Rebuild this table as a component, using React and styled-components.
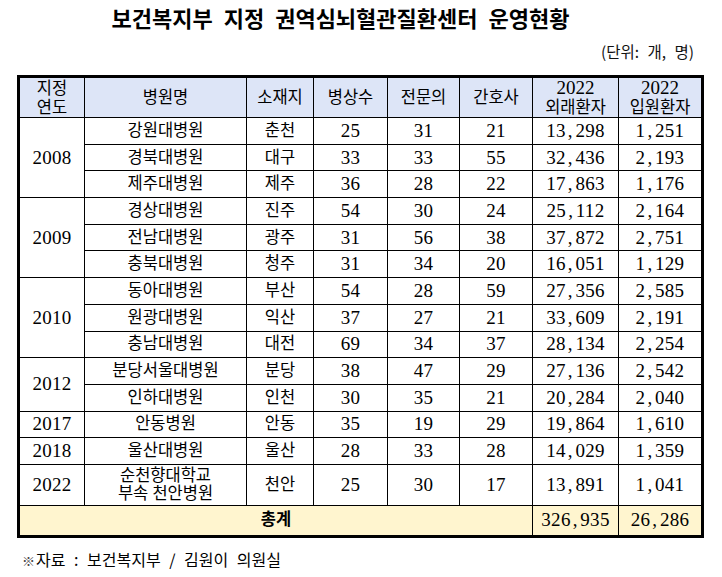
import styled, { createGlobalStyle } from "styled-components";

const GlobalStyle = createGlobalStyle`
  body {
    margin: 0;
    background: #fff;
    color: #000;
    font-family: "Noto Sans CJK KR", sans-serif;
  }
`;

const groups = [
  {
    year: "2008",
    rows: [
      ["강원대병원", "춘천", "25", "31", "21", "13,298", "1,251"],
      ["경북대병원", "대구", "33", "33", "55", "32,436", "2,193"],
      ["제주대병원", "제주", "36", "28", "22", "17,863", "1,176"],
    ],
  },
  {
    year: "2009",
    rows: [
      ["경상대병원", "진주", "54", "30", "24", "25,112", "2,164"],
      ["전남대병원", "광주", "31", "56", "38", "37,872", "2,751"],
      ["충북대병원", "청주", "31", "34", "20", "16,051", "1,129"],
    ],
  },
  {
    year: "2010",
    rows: [
      ["동아대병원", "부산", "54", "28", "59", "27,356", "2,585"],
      ["원광대병원", "익산", "37", "27", "21", "33,609", "2,191"],
      ["충남대병원", "대전", "69", "34", "37", "28,134", "2,254"],
    ],
  },
  {
    year: "2012",
    rows: [
      ["분당서울대병원", "분당", "38", "47", "29", "27,136", "2,542"],
      ["인하대병원", "인천", "30", "35", "21", "20,284", "2,040"],
    ],
  },
  {
    year: "2017",
    rows: [["안동병원", "안동", "35", "19", "29", "19,864", "1,610"]],
  },
  {
    year: "2018",
    rows: [["울산대병원", "울산", "28", "33", "28", "14,029", "1,359"]],
  },
  {
    year: "2022",
    tall: true,
    rows: [
      [["순천향대학교", "부속 천안병원"], "천안", "25", "30", "17", "13,891", "1,041"],
    ],
  },
];

const colWidths = [66, 162, 67, 74, 72, 73, 86, 84];

// 천 단위 쉼표가 원본에서 넓게 잡혀 있어 따로 간격을 준다
const withCommas = (s) =>
  s.split(",").map((part, i) => (
    <span key={i}>
      {i > 0 && <Comma>,</Comma>}
      {part}
    </span>
  ));

const App = () => {
  return (
    <Page>
      <GlobalStyle />
      <Title>보건복지부 지정 권역심뇌혈관질환센터 운영현황</Title>
      <Unit>(단위: 개, 명)</Unit>
      <Table>
        <colgroup>
          {colWidths.map((w, i) => (
            <col key={i} style={{ width: w }} />
          ))}
        </colgroup>
        <thead>
          <HeadRow>
            <HeadCell>
              지정
              <br />
              연도
            </HeadCell>
            <HeadCell>병원명</HeadCell>
            <HeadCell>소재지</HeadCell>
            <HeadCell>병상수</HeadCell>
            <HeadCell>전문의</HeadCell>
            <HeadCell>간호사</HeadCell>
            <HeadCell>
              <Digits>2022</Digits>
              <br />
              외래환자
            </HeadCell>
            <HeadCell>
              <Digits>2022</Digits>
              <br />
              입원환자
            </HeadCell>
          </HeadRow>
        </thead>
        <tbody>
          {groups.map((g) =>
            g.rows.map((r, i) => (
              <Row key={g.year + i} $tall={g.tall}>
                {i === 0 && <NumCell rowSpan={g.rows.length}>{g.year}</NumCell>}
                <TextCell $tight={Array.isArray(r[0])}>
                  {Array.isArray(r[0]) ? (
                    <>
                      {r[0][0]}
                      <br />
                      {r[0][1]}
                    </>
                  ) : (
                    r[0]
                  )}
                </TextCell>
                <TextCell>{r[1]}</TextCell>
                {r.slice(2).map((v, j) => (
                  <NumCell key={j}>{withCommas(v)}</NumCell>
                ))}
              </Row>
            ))
          )}
          <TotalRow>
            <TotalLabel colSpan={6}>총계</TotalLabel>
            <NumCell>{withCommas("326,935")}</NumCell>
            <NumCell>{withCommas("26,286")}</NumCell>
          </TotalRow>
        </tbody>
      </Table>
      <Note>
        <Mark>※</Mark>자료 : 보건복지부 / 김원이 의원실
      </Note>
    </Page>
  );
};

export default App;

const Page = styled.div`
  width: 722px;
  padding: 0 18px 0 17px;
  box-sizing: border-box;
`;

const Title = styled.h1`
  margin: 3px 0 0;
  padding-right: 40px;
  font-size: 22px;
  line-height: 28px;
  font-weight: 700;
  text-align: center;
  word-spacing: 6px;
  color: #000;
`;

const Unit = styled.div`
  margin-top: 10px;
  padding-right: 10px;
  font-size: 15.5px;
  line-height: 20px;
  text-align: right;
  word-spacing: 5px;
  color: #111;
`;

const Table = styled.table`
  margin-top: 14px;
  width: 687px;
  table-layout: fixed;
  border-collapse: collapse;
  border: 3px solid #000;
  font-family: "Liberation Serif", "Noto Sans CJK KR", serif;

  & td,
  & th {
    border: 1px solid #000;
    padding: 0;
    text-align: center;
    vertical-align: middle;
    color: #000;
  }
`;

const HeadRow = styled.tr`
  height: 40px;
  background: #dde5f7;
`;

const HeadCell = styled.th`
  font-weight: 400;
  font-size: 16.5px;
  line-height: 19px;
`;

const Digits = styled.span`
  font-size: 19px;
`;

const Row = styled.tr`
  height: ${(p) => (p.$tall ? "41px" : "26.69px")};
`;

const TextCell = styled.td`
  font-size: 16.5px;
  line-height: ${(p) => (p.$tight ? "18px" : "20px")};
`;

const NumCell = styled.td`
  font-size: 19px;
  line-height: 20px;
  letter-spacing: 0.3px;
`;

const Comma = styled.span`
  margin: 0 2.5px 0 2px;
`;

const TotalRow = styled.tr`
  height: 31px;
  background: #fff5cf;
`;

const TotalLabel = styled.td`
  font-size: 16.5px;
  font-weight: 700;
  line-height: 20px;
`;

const Note = styled.div`
  margin-top: 10px;
  padding-left: 5px;
  font-size: 16px;
  line-height: 22px;
  word-spacing: 5px;
  color: #000;
`;

const Mark = styled.span`
  font-size: 13px;
  color: #444;
  margin-right: 1px;
`;
